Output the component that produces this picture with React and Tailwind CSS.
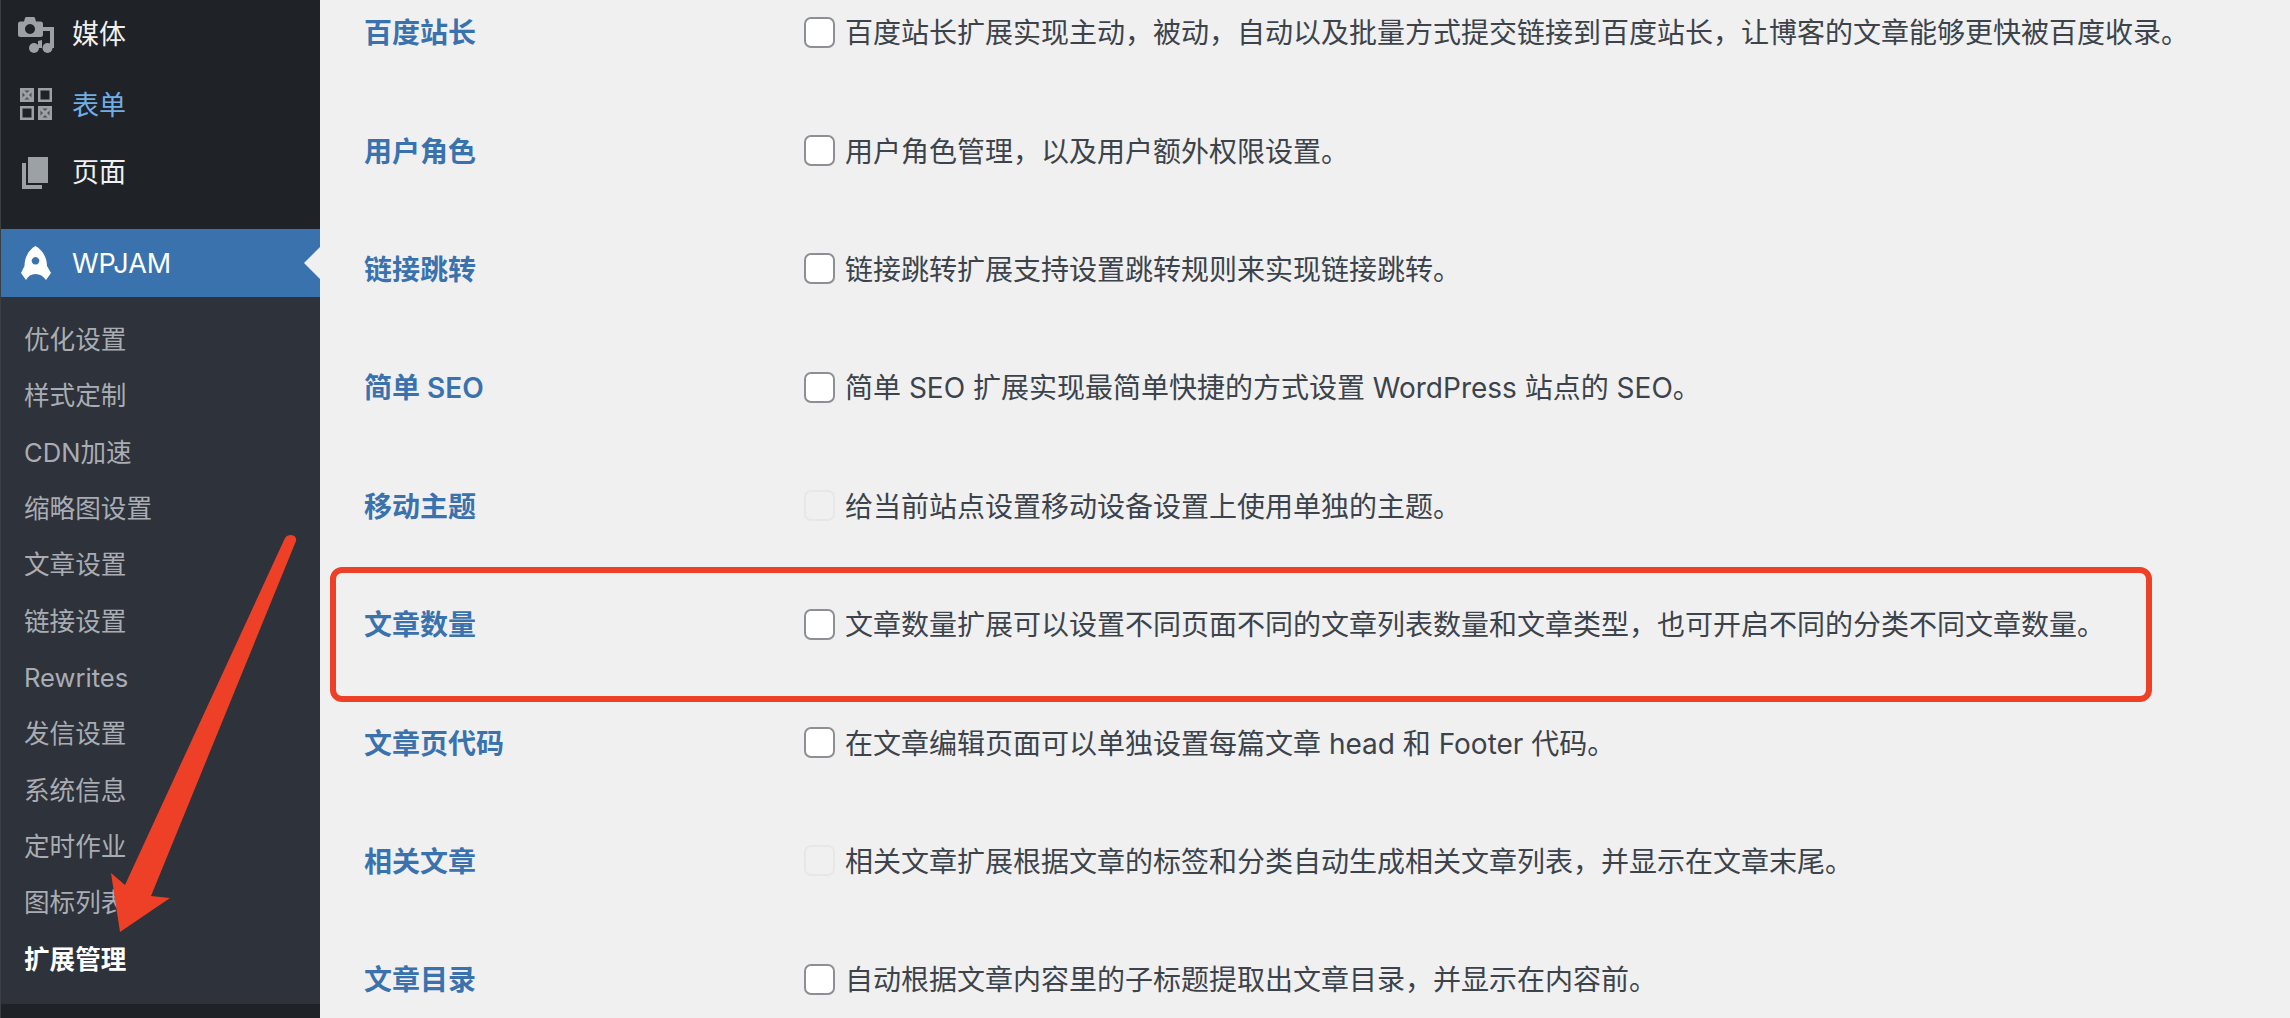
const FONT = "font-['Inter','Noto_Sans_CJK_SC',sans-serif]";

const subItems = [
  "优化设置",
  "样式定制",
  "CDN加速",
  "缩略图设置",
  "文章设置",
  "链接设置",
  "Rewrites",
  "发信设置",
  "系统信息",
  "定时作业",
  "图标列表",
];

const rows = [
  { name: "百度站长", text: "百度站长扩展实现主动，被动，自动以及批量方式提交链接到百度站长，让博客的文章能够更快被百度收录。" },
  { name: "用户角色", text: "用户角色管理，以及用户额外权限设置。" },
  { name: "链接跳转", text: "链接跳转扩展支持设置跳转规则来实现链接跳转。" },
  { name: "简单 SEO", text: "简单 SEO 扩展实现最简单快捷的方式设置 WordPress 站点的 SEO。" },
  { name: "移动主题", text: "给当前站点设置移动设备设置上使用单独的主题。", disabled: true },
  { name: "文章数量", text: "文章数量扩展可以设置不同页面不同的文章列表数量和文章类型，也可开启不同的分类不同文章数量。" },
  { name: "文章页代码", text: "在文章编辑页面可以单独设置每篇文章 head 和 Footer 代码。" },
  { name: "相关文章", text: "相关文章扩展根据文章的标签和分类自动生成相关文章列表，并显示在文章末尾。", disabled: true },
  { name: "文章目录", text: "自动根据文章内容里的子标题提取出文章目录，并显示在内容前。" },
];

const MediaIcon = () => (
  <svg viewBox="0 0 36 36" className="h-9 w-9" fill="#9ca1a6">
    <path
      fillRule="evenodd"
      d="M6 4.500 7 1q.3-1 1.500-1h7q1.200 0 1.500 1l1 3.500h4.500q2.500 0 2.500 2.500v10.500q0 2.500-2.500 2.500H2.500Q0 20 0 17.500V7q0-2.500 2.500-2.500zM12 7a5 5 0 1 0 .01 0z"
    />
    <path d="M25 10h11v21h-4V14h-7z" />
    <circle cx="29.500" cy="31" r="5" />
    <path d="M20 24l4-1v8h-4z" />
    <circle cx="16" cy="31" r="5" />
  </svg>
);

const FormsIcon = () => (
  <svg viewBox="0 0 32 32" className="h-8 w-8" fill="none" stroke="#9ca1a6" strokeWidth="2.500">
    <rect x="1.250" y="1.250" width="11.500" height="11.500" fill="#4a4f53" />
    <path d="M2 2l10 10M12 2L2 12" strokeWidth="3" />
    <rect x="19.250" y="1.250" width="11.500" height="11.500" />
    <rect x="1.250" y="19.250" width="11.500" height="11.500" />
    <rect x="19.250" y="19.250" width="11.500" height="11.500" fill="#4a4f53" />
    <path d="M20 20l10 10M30 20L20 30" strokeWidth="3" />
  </svg>
);

const PagesIcon = () => (
  <svg viewBox="0 0 26 32" className="h-8 w-[26px]" fill="#9ca1a6">
    <path d="M6 0h20v26H6z" />
    <path d="M0 6h4v22h16v4H0z" />
  </svg>
);

const RocketIcon = () => (
  <svg viewBox="0 0 30 35" className="h-[35px] w-[30px]" fill="#ffffff">
    <path
      fillRule="evenodd"
      d="M14.500 0C21 3.500 26 11 26 20l4 7-5 7q-4-6-10.500-6T5 34l-5-7 3.500-7C3.500 11 8 3.500 14.500 0zm0 11a3.800 3.800 0 1 0 .01 0z"
    />
  </svg>
);

function Sidebar() {
  return (
    <aside className="flex h-full w-[320px] shrink-0 flex-col border-l border-[#3a3f44] bg-[#1f2327]">
      <nav className="mb-[22px] flex flex-col text-[27px] text-[#f0f0f1]">
        <div className="flex h-[69px] items-center">
          <div className="ml-[17px] flex w-[54px]"><MediaIcon /></div>
          <span className="pt-[2px]">媒体</span>
        </div>
        <div className="flex h-[69px] items-center">
          <div className="ml-[19px] flex w-[52px]"><FormsIcon /></div>
          <span className="pt-[5px] text-[#72aee6]">表单</span>
        </div>
        <div className="flex h-[69px] items-center">
          <div className="ml-[21px] flex w-[50px]"><PagesIcon /></div>
          <span className="pt-[2px]">页面</span>
        </div>
      </nav>

      <div className="relative flex h-[68px] shrink-0 items-center bg-[#3a72ad] text-[27px] text-white">
        <div className="ml-[20px] flex w-[51px]"><RocketIcon /></div>
        <span className="pt-[2px]">WPJAM</span>
        <div className="absolute right-0 top-[18px] h-0 w-0 border-y-[16px] border-r-[16px] border-y-transparent border-r-[#f0f0f1]" />
      </div>

      <ul className="flex h-[707px] shrink-0 flex-col bg-[#2e323a] pb-[16px] pt-[15px] text-[25.6px] text-[#a9adb3]">
        {subItems.map((item) => (
          <li key={item} className="flex h-[56.36px] items-center pl-[23px]">{item}</li>
        ))}
        <li className="flex h-[56.36px] items-center pl-[23px] font-bold text-white">扩展管理</li>
      </ul>
    </aside>
  );
}

function Row({ name, text, disabled }) {
  return (
    <div className="flex h-[118.4px] shrink-0 items-center">
      <div className="w-[440px] shrink-0 pt-[2px] text-[28px] font-semibold text-[#3a72ad]">{name}</div>
      <input
        type="checkbox"
        disabled={disabled}
        className={
          disabled
            ? "mr-[10px] h-[31px] w-[31px] shrink-0 appearance-none rounded-[7px] border-2 border-[#e6e7e8] bg-[#f0f0f1]"
            : "mr-[10px] h-[31px] w-[31px] shrink-0 appearance-none rounded-[7px] border-2 border-[#8c8f94] bg-white"
        }
      />
      <span className="whitespace-nowrap pt-[2px] text-[28px] text-[#3c434a]">{text}</span>
    </div>
  );
}

export default function App() {
  return (
    <div lang="zh-CN" className={`relative flex h-[1018px] w-[2290px] overflow-hidden bg-[#f0f0f1] ${FONT}`}>
      <Sidebar />
      <main className="-mt-[27px] flex min-w-0 flex-1 flex-col pl-[44px]">
        {rows.map((row) => (
          <Row key={row.name} {...row} />
        ))}
      </main>

      {/* annotations drawn on top of the screenshot */}
      <div className="pointer-events-none absolute left-[330px] top-[567px] h-[135px] w-[1822px] rounded-[12px] border-[6px] border-[#ee4026]" />
      <svg className="pointer-events-none absolute left-0 top-0 h-[1018px] w-[320px]" viewBox="0 0 320 1018">
        <path
          fill="#ee4026"
          d="M285 538q2-3 6-3 6 1 5 6L151 896l19 2-50 34-9-59 14 12z"
        />
      </svg>
    </div>
  );
}
